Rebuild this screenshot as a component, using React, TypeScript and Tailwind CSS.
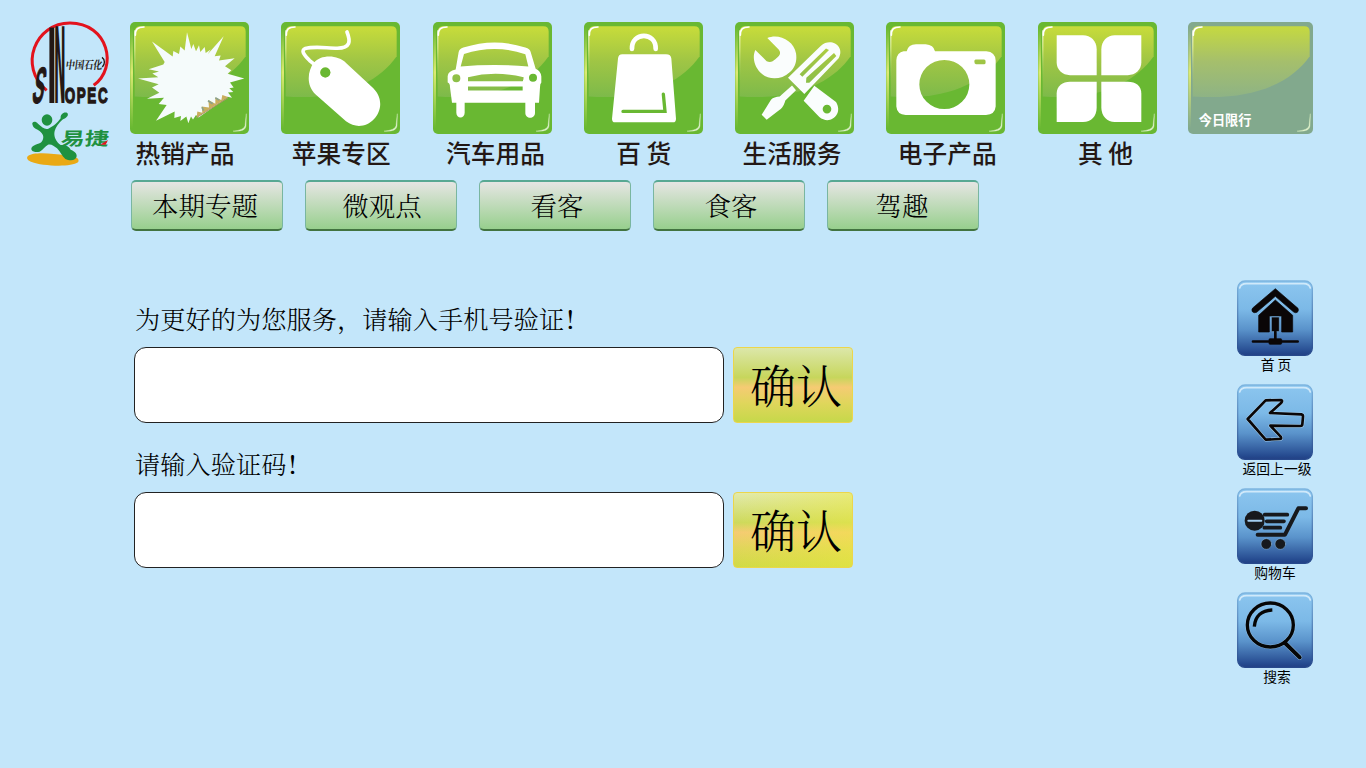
import type { ReactNode } from "react";

const HEI = "font-['Noto_Sans_CJK_SC',sans-serif]";
const SONG = "font-['Noto_Serif_CJK_SC','Noto_Sans_CJK_SC',sans-serif] font-light";

function Tile({ children, id, wide = false }: { children?: ReactNode; id: string; wide?: boolean }) {
  const w = wide ? 375 : 357;
  const base = wide ? "#82a98d" : "#69b832";
  return (
    <svg
      className={wide ? "block h-[112px] w-[125px]" : "block h-[112px] w-[119px]"}
      viewBox={`0 0 ${w} 337`}
      preserveAspectRatio="none"
    >
      <defs>
        <linearGradient id={`${id}g`} x1="0" y1="0" x2="0" y2="1">
          <stop offset="0" stopColor={wide ? "#c5d940" : "#c8dc3a"} />
          <stop offset="0.5" stopColor={wide ? "#a5bf6c" : "#9fc545"} />
          <stop offset="1" stopColor={wide ? "#8eb385" : "#7dba4a"} />
        </linearGradient>
        <linearGradient id={`${id}l`} x1="0" y1="0" x2="0" y2="1">
          <stop offset="0" stopColor={base} />
          <stop offset="0.45" stopColor="#dcea72" />
          <stop offset="1" stopColor={base} />
        </linearGradient>
        <linearGradient id={`${id}w`} x1="0" y1="0" x2="0" y2="1">
          <stop offset="0" stopColor="#fff" />
          <stop offset="0.3" stopColor="#e9f3a0" />
          <stop offset="1" stopColor={base} stopOpacity="0" />
        </linearGradient>
      </defs>
      <rect width={w} height="337" rx="15" fill={base} />
      <rect x="1" y="14" width="8" height="306" fill={`url(#${id}l)`} />
      <path
        d={`M14 30Q14 13 31 13H${w - 26}Q${w - 10} 13 ${w - 10} 29V103C${w - 60} 175 ${w - 165} 238 14 224Z`}
        fill={`url(#${id}g)`}
      />
      <rect x="13" y="25" width="3" height="180" fill={`url(#${id}w)`} />
      <path d="M16 40C16 22 22 15 42 15" stroke="#fff" strokeWidth="5" fill="none" strokeLinecap="round" />
      <path
        d={`M${w - 48} 328.5Q${w - 10} 331 ${w - 9} 313L${w - 8} 276L${w - 12} 312Q${w - 14} 325 ${w - 48} 328.5Z`}
        fill="#e2f2d0"
        stroke="#d5edbd"
        strokeOpacity="0.6"
        strokeWidth="2"
      />
      {children}
    </svg>
  );
}

const Burst = (
  <g transform="translate(-30 -35)">
    <path
      fill="#f5fbfb"
      d="M201 66L214 116L220 101L228 123L237 105L241 125L254 110L257 128L272 118L263 132L311 78L284 138L302 136L297 151L344 144L315 168L334 180L323 191L373 205L330 217L341 232L328 234L340 246L324 247L336 263L323 260L236 322L228 315L219 328L213 319L205 340L199 319L181 333L183 318L163 324L164 304L108 332L140 285L116 282L132 263L81 266L118 248L96 232L116 222L54 205L115 201L97 190L117 184L86 177L130 163L134 155L96 94L158 139L160 122L177 131L181 109L194 121Z"
    />
    <path fill="#c9ae5d" d="M230 322L232 304L247 308L245 289L267 292L265 270L286 281L286 262L304 270L307 255L324 261Z" />
    <path d="M229 323L324 263" stroke="#b3936d" strokeWidth="3" />
    <path d="M264 272L278 281M286 263L298 270M246 291L251 302" stroke="#8ba28c" strokeWidth="5" />
  </g>
);

const Mouse = (
  <g transform="translate(-484 -35)">
    <path
      d="M682 65C693 93 693 113 653 114C620 114 585 107 557 115C543 120 552 133 570 151L587 165"
      stroke="#fff"
      strokeWidth="11"
      fill="none"
      strokeLinecap="round"
    />
    <path
      fill="#fff"
      fillRule="evenodd"
      d="M583 157C603 133 654 132 680 159L761 234C819 294 743 382 679 334L588 253C558 226 564 181 583 157ZM617 172A15 15 0 1 0 617 202A15 15 0 1 0 617 172Z"
    />
    <circle cx="617" cy="187" r="15" fill="#69b832" />
  </g>
);

const CarFace = (
  <g transform="translate(-22 -35)">
    <path
      fill="#fff"
      fillRule="evenodd"
      d="M90 178L99 125Q101 116 113 112Q208 81 299 112Q313 116 315 125L330 176Q345 182 347 199V217Q343 221 343 231L340 278H328V308C328 328 299 328 299 308V278H117V308C117 327 92 327 92 308V278H79L73 231Q73 219 66 217V198Q67 183 90 178ZM115 131L105 169Q207 160 308 169L299 132Q209 101 115 131ZM92 192A12 12 0 1 0 92 216A12 12 0 1 0 92 192ZM322 191A12 12 0 1 0 322 215A12 12 0 1 0 322 191ZM127 201V213H291Q294 207 294 201Q209 181 127 201ZM127 229V241H291V229Z"
    />
  </g>
);

const Bag = (
  <g transform="translate(-477 -35)">
    <path d="M621 116C619 64 694 63 692 116" stroke="#fff" strokeWidth="14" fill="none" strokeLinecap="round" />
    <path fill="#fff" d="M592 132H723Q738 132 739 145L753 326Q753 337 744 337H570Q561 337 561 326L579 145Q580 132 592 132Z" />
    <path d="M594 304H720L715 252" stroke="#69b832" strokeWidth="10" fill="none" strokeLinecap="round" />
  </g>
);

const Tools = (
  <g transform="translate(-30 -35)" fill="#fafdfd">
    <path d="M127 83C161 68 207 91 213 129C217 154 209 174 194 186C167 211 129 210 106 187C86 167 82 138 91 119L125 153C136 158 143 154 151 147C164 137 170 130 161 118Z" />
    <path
      fillRule="evenodd"
      d="M189 203L287 107C319 79 361 110 341 144L238 252ZM231 185L224 192L232 200L312 119L303 115ZM244 203L243 218H253L334 137L327 128Z"
    />
    <path d="M201 226L213 240L181 271C177 285 173 292 163 300L125 329L110 314L138 269C144 262 153 260 164 259Z" />
    <path fillRule="evenodd" d="M268 227L333 276C356 314 314 347 283 321L236 272ZM306 284A13 13 0 1 0 306 310A13 13 0 1 0 306 284Z" />
  </g>
);

const Camera = (
  <g transform="translate(-484 -35)">
    <path
      fill="#fff"
      fillRule="evenodd"
      d="M537 123H546Q551 102 574 102H603Q627 104 631 123H785Q812 125 813 151V289Q811 313 784 315H543Q517 313 515 289V150Q517 126 537 123ZM659 149A75 74 0 1 0 659 297A75 74 0 1 0 659 149ZM753 148Q749 148 749 154Q749 162 754 162H779Q783 162 783 155Q783 148 778 148Z"
    />
  </g>
);

const Leaves = (
  <g transform="translate(-38 -35)" fill="#fff">
    <path d="M94 75H173C196 75 214 92 214 117V195H134C111 195 94 178 94 157Z" />
    <path d="M348 75H268C246 75 228 92 228 117V195H307C331 195 348 178 348 157Z" />
    <path d="M94 336V250C94 228 112 215 134 215H214V292C214 318 198 336 173 336Z" />
    <path d="M348 336V250C348 228 332 215 307 215H228V292C228 318 246 336 268 336Z" />
  </g>
);

const categories = [
  { id: "hot", label: "热销产品", icon: Burst, shift: "pr-2.5" },
  { id: "apple", label: "苹果专区", icon: Mouse, shift: "" },
  { id: "auto", label: "汽车用品", icon: CarFace, shift: "pl-1.5" },
  { id: "store", label: "百 货", icon: Bag, shift: "" },
  { id: "life", label: "生活服务", icon: Tools, shift: "pr-1.5" },
  { id: "digital", label: "电子产品", icon: Camera, shift: "pl-0.5" },
  { id: "other", label: "其 他", icon: Leaves, shift: "pl-4" },
];

const topics = [
  { label: "本期专题", shift: "pr-1" },
  { label: "微观点", shift: "pl-0.5" },
  { label: "看客", shift: "pl-1" },
  { label: "食客", shift: "pl-1" },
  { label: "驾趣", shift: "pr-0.5" },
];

function Logo() {
  return (
    <svg className="ml-5 block h-[170px] w-[110px] shrink-0 overflow-visible" viewBox="0 -30 330 510">
      <path d="M80 241C-6 170 45 39 150 39C264 39 296 172 221 226" stroke="#e3131d" strokeWidth="9" fill="none" />
      <g fill="#231815" stroke="#231815" fontWeight="bold">
        <text transform="translate(81 278) scale(.78 3.12)" fontFamily="DejaVu Sans" fontSize="100" strokeWidth="0">
          I
        </text>
        <text transform="translate(102 278) scale(.42 3.15)" fontFamily="DejaVu Sans" fontSize="100" strokeWidth="0">
          N
        </text>
        <text
          transform="translate(134 278) scale(.62 1)"
          fontFamily="Liberation Sans"
          fontSize="65"
          strokeWidth="4"
          textLength="208"
          lengthAdjust="spacing"
        >
          OPEC
        </text>
        <text transform="translate(33 280) skewX(-10) scale(.6 1.8)" fontFamily="Liberation Sans" fontSize="85" strokeWidth="2">
          S
        </text>
      </g>
      <text
        transform="translate(136 177) skewX(-8) scale(.9 1)"
        fill="#231815"
        fontFamily="Noto Serif CJK SC"
        fontWeight="bold"
        fontSize="34"
        textLength="122"
        lengthAdjust="spacingAndGlyphs"
      >
        中国石化
      </text>
      <path d="M246 142C256 149 255 163 247 171" stroke="#231815" strokeWidth="4" fill="none" />
      <path
        d="M24 438C42 424 101 431 135 436C150 438 160 440 163 442C173 442 179 451 174 457C153 473 65 468 35 456C24 452 17 445 24 438Z"
        fill="#eaa914"
      />
      <g fill="#1f9140">
        <ellipse cx="81" cy="330" rx="16" ry="17" />
        <path d="M38 346C33 336 45 331 54 341C66 352 74 359 85 356C98 351 113 338 122 325C120 312 133 304 142 309C148 317 137 325 127 329C117 339 107 350 104 363C100 380 108 395 122 405C137 404 148 410 152 419C163 423 171 430 170 439C168 454 148 453 136 447C125 438 122 425 111 415C102 407 93 401 84 404C75 408 70 419 59 425C41 429 29 421 36 411C45 402 61 403 66 394C73 382 70 373 62 366C54 358 41 357 38 346Z" />
        <text
          transform="translate(121 404) skewX(-6)"
          fontFamily="Noto Sans CJK SC"
          fontWeight="bold"
          fontSize="54"
          textLength="144"
          lengthAdjust="spacingAndGlyphs"
        >
          易捷
        </text>
      </g>
      <path d="M240 404L264 390L257 404Z" fill="#e3131d" />
    </svg>
  );
}

function BlueTile({ id, children }: { id: string; children: ReactNode }) {
  return (
    <svg className="block h-[76px] w-[76px]" viewBox="0 0 228 228">
      <defs>
        <linearGradient id={id} x1="0" y1="0" x2="0" y2="1">
          <stop offset="0" stopColor="#8cc6ef" />
          <stop offset="0.38" stopColor="#7cb9e7" />
          <stop offset="0.65" stopColor="#5a93cb" />
          <stop offset="0.95" stopColor="#264b90" />
          <stop offset="1" stopColor="#213f83" />
        </linearGradient>
        <linearGradient id={id + "e"} x1="0" y1="0" x2="0" y2="1">
          <stop offset="0" stopColor="#7db5e0" />
          <stop offset="1" stopColor="#27498c" />
        </linearGradient>
      </defs>
      <rect x="2" y="3" width="224" height="223" rx="22" fill={`url(#${id})`} stroke={`url(#${id}e)`} strokeWidth="4" />
      <path d="M8 24Q12 11 28 11H200Q216 11 220 24" fill="none" stroke="#d0e9fa" strokeWidth="5" strokeLinecap="round" />
      <g transform="translate(0 2)">{children}</g>
    </svg>
  );
}

const Home = (
  <g transform="translate(-36 -30)" fill="#0a0607" stroke="#0a0607" strokeWidth="2">
    <path d="M151 88L203 134V184H170V136H133V184H101V134Z" />
    <path d="M139 139H163V183H139Z" stroke="#78aedd" strokeWidth="2" />
    <path d="M151 183V206M84 212.500H218" strokeWidth="8" strokeLinecap="round" />
    <rect x="132" y="204" width="38" height="17" rx="3" />
    <path d="M151 54L219 113Q222 120 217 125Q212 128 206 124L151 77L95 125Q87 128 82 123Q79 117 83 112Z" />
  </g>
);

const Back = (
  <g transform="translate(-36 -345)" fill="none" strokeLinejoin="round">
    {[{ c: "#a9d3f1", w: 11 }, { c: "#0a0607", w: 8 }].map((s) => (
      <path
        key={s.w}
        d="M68 448L122 392L168 391Q174 393 169 399L135 430L229 434Q234 435 234 440L232 464Q232 469 226 469L136 468L167 501Q171 508 164 508L122 510Z"
        stroke={s.c}
        strokeWidth={s.w}
      />
    ))}
  </g>
);

const Cart = (
  <g transform="translate(-36 -25)" fill="none" stroke="#17191d" strokeLinecap="round" strokeLinejoin="round">
    <path d="M98 163H180L220 84H243" strokeWidth="12" />
    <path d="M119 103H187M125 123H177M118 142H166" strokeWidth="11" />
    <circle cx="89" cy="121" r="30" fill="#17191d" stroke="none" />
    <path d="M70 121H109" stroke="#a3cdf0" strokeWidth="6" />
    <circle cx="124" cy="191" r="16" fill="#17191d" stroke="#8fbde3" strokeWidth="1.5" />
    <circle cx="166" cy="191" r="16" fill="#17191d" stroke="#8fbde3" strokeWidth="1.5" />
  </g>
);

const Search = (
  <g transform="translate(-36 -336)" fill="none" strokeLinecap="round">
    <path d="M180 487L224 530" stroke="#8fbde3" strokeWidth="15" />
    <ellipse cx="136" cy="433" rx="69" ry="66" stroke="#8fbde3" strokeWidth="13" />
    <ellipse cx="136" cy="433" rx="69" ry="66" stroke="#050505" strokeWidth="10" />
    <path d="M180 487L224 530" stroke="#050505" strokeWidth="12" />
    <path d="M88 438C90 407 110 389 142 388" stroke="#050505" strokeWidth="10" strokeLinecap="butt" />
  </g>
);

const shortcuts = [
  { id: "home", label: "首 页", icon: Home, shift: "pl-0.5" },
  { id: "back", label: "返回上一级", icon: Back, shift: "pl-1" },
  { id: "cart", label: "购物车", icon: Cart, shift: "" },
  { id: "search", label: "搜索", icon: Search, shift: "pl-1" },
];

function Field({ label, tone }: { label: string; tone: string }) {
  return (
    <div>
      <div
        className={`${SONG} h-[50px] pl-px text-[25.2px] leading-[42px] tracking-[0.06px] whitespace-nowrap text-black`}
      >
        {label}
        <span className="ml-[2px] font-medium">!</span>
      </div>
      <div className="flex gap-[9px]">
        <input
          aria-label={label}
          className="h-[76px] w-[590px] rounded-[12px] border border-[#222] bg-white px-4 text-3xl outline-none"
        />
        <button
          className={`${SONG} h-[76px] w-[120px] rounded-[4px] border border-[#ecd64b] pb-[5px] pl-1.5 text-[46px] leading-[66px] text-black ${tone}`}
        >
          确认
        </button>
      </div>
    </div>
  );
}

export default function App() {
  return (
    <div className={`${HEI} h-[768px] w-[1366px] overflow-hidden bg-[#c3e6fa] text-[#231815]`}>
      <header className="flex h-[240px]">
        <Logo />
        <div className="pt-[22px]">
          <div className="flex">
            {categories.map((c) => (
              <div key={c.id} className="w-[151.25px]">
                <Tile id={c.id}>{c.icon}</Tile>
                <div className={`w-[120px] text-center text-[24.7px] leading-[37px] font-medium whitespace-nowrap ${c.shift}`}>
                  {c.label}
                </div>
              </div>
            ))}
            <div className="-ml-px grid h-[112px] w-[125px]">
              <div className="col-start-1 row-start-1">
                <Tile id="limit" wide />
              </div>
              <div className="col-start-1 row-start-1 self-end pb-1 pl-[11px] text-[13.2px] leading-5 font-bold text-white">
                今日限行
              </div>
            </div>
          </div>
          <nav className="mt-[9px] ml-px flex gap-[22px]">
            {topics.map((t) => (
              <button
                key={t.label}
                className={`${SONG} h-[51px] w-[152px] rounded-[5px] border border-x-[#79b6a0] border-t-2 border-t-[#58a893] border-b-2 border-b-[#427440] bg-linear-to-b from-[#e5e5e3] to-[#97cf8d] pb-0.5 text-[26.5px] leading-[42px] text-black ${t.shift}`}
              >
                {t.label}
              </button>
            ))}
          </nav>
        </div>
      </header>
      <main className="flex justify-between pr-[53px] pl-[134px]">
        <section className="flex flex-col gap-[19px] pt-[57px]">
          <Field
            label="为更好的为您服务，请输入手机号验证"
            tone="bg-[linear-gradient(180deg,#dce7a9_0%,#c7d65c_40%,#f5cb73_53%,#dfd65b_75%,#c6d84a_100%)]"
          />
          <Field
            label="请输入验证码"
            tone="bg-[linear-gradient(90deg,rgba(240,235,60,0)_0%,rgba(240,235,60,0.45)_100%),linear-gradient(180deg,#e2eaae_0%,#cdd95c_40%,#f5cb73_53%,#e0d65a_75%,#d0db46_100%)]"
          />
        </section>
        <aside className="flex w-[76px] flex-col items-center pt-10">
          {shortcuts.map((s) => (
            <div key={s.id} className="flex h-[104px] flex-col items-center">
              <BlueTile id={s.id + "Blue"}>{s.icon}</BlueTile>
              <div className={`text-[13.8px] leading-[17px] whitespace-nowrap text-black ${s.shift}`}>{s.label}</div>
            </div>
          ))}
        </aside>
      </main>
    </div>
  );
}
